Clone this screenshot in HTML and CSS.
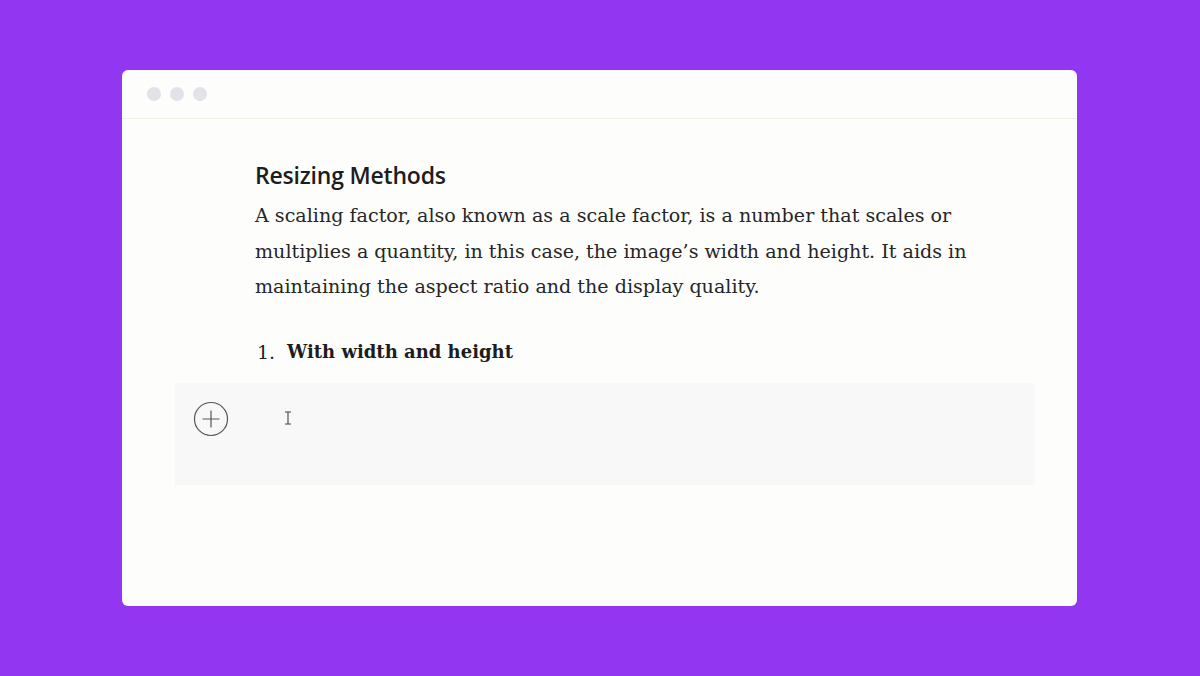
FILE: index.html
```html
<!DOCTYPE html>
<html>
<head>
<meta charset="utf-8">
<link rel="stylesheet" href="styles.css">
</head>
<body>
<div class="stage">
  <div class="window">
    <div class="titlebar">
      <span class="dot"></span><span class="dot"></span><span class="dot"></span>
    </div>
    <div class="content">
      <h2 class="heading">Resizing Methods</h2>
      <p class="para">A scaling factor, also known as a scale factor, is a number that scales or multiplies a quantity, in this case, the image’s width and height. It aids in maintaining the aspect ratio and the display quality.</p>
      <ol class="list">
        <li class="item"><span class="num">1.</span><span class="label">With width and height</span></li>
      </ol>
    </div>
    <div class="block">
      <span class="plus">
        <svg width="36" height="36" viewBox="0 0 36 36"><circle cx="18" cy="18" r="16.5" fill="none" stroke="#555" stroke-width="1.2"/><path d="M18 9.5v17M9.5 18h17" stroke="#555" stroke-width="1.2" fill="none"/></svg>
      </span>
      <span class="cursor">
        <svg width="8" height="14" viewBox="0 0 8 14"><path d="M1 1h6M4 1v12M1 13h6" stroke="#444" stroke-width="1.1" fill="none"/></svg>
      </span>
    </div>
  </div>
</div>
</body>
</html>
```
FILE: styles.css
```css
* { box-sizing: border-box; }
html, body { margin: 0; padding: 0; }
body { background: #9236f2; width: 1200px; height: 676px; overflow: hidden; }
.stage { padding: 70px 123px 0 122px; }
.window {
  width: 955px; height: 536px; background: #fdfdfc;
  border-radius: 6px; overflow: hidden;
}
.titlebar {
  height: 49px; border-bottom: 1px solid #efefe2;
  display: flex; align-items: center; gap: 9px; padding: 0 0 0 25px;
}
.dot { width: 14px; height: 14px; border-radius: 50%; background: #e2e2e8; }
.content { padding: 41px 0 0 133px; }
.heading {
  margin: 0; font-family: "Open Sans", sans-serif; font-weight: 600;
  font-size: 23px; line-height: 30px; color: #1d1d1d; letter-spacing: -0.2px;
}
.para {
  margin: 8px 0 0; font-family: "DejaVu Serif", serif; font-size: 19.1px;
  line-height: 35.5px; color: #262626; width: 740px;
}
.list {
  margin: 29px 0 0; padding: 0; list-style: none; font-family: "DejaVu Serif", serif;
  font-size: 19px; line-height: 36px; color: #1d1d1d;
}
.item { display: flex; }
.num { width: 32px; padding-left: 2px; }
.label { font-weight: bold; font-size: 18px; }
.block {
  margin: 13px 0 0 53px; width: 860px; height: 102px; background: #f8f8f8;
  display: flex; align-items: flex-start; padding: 18px 0 0 18px;
}
.plus { display: block; width: 36px; height: 36px; }
.cursor { display: block; margin: 10px 0 0 55px; }
```
